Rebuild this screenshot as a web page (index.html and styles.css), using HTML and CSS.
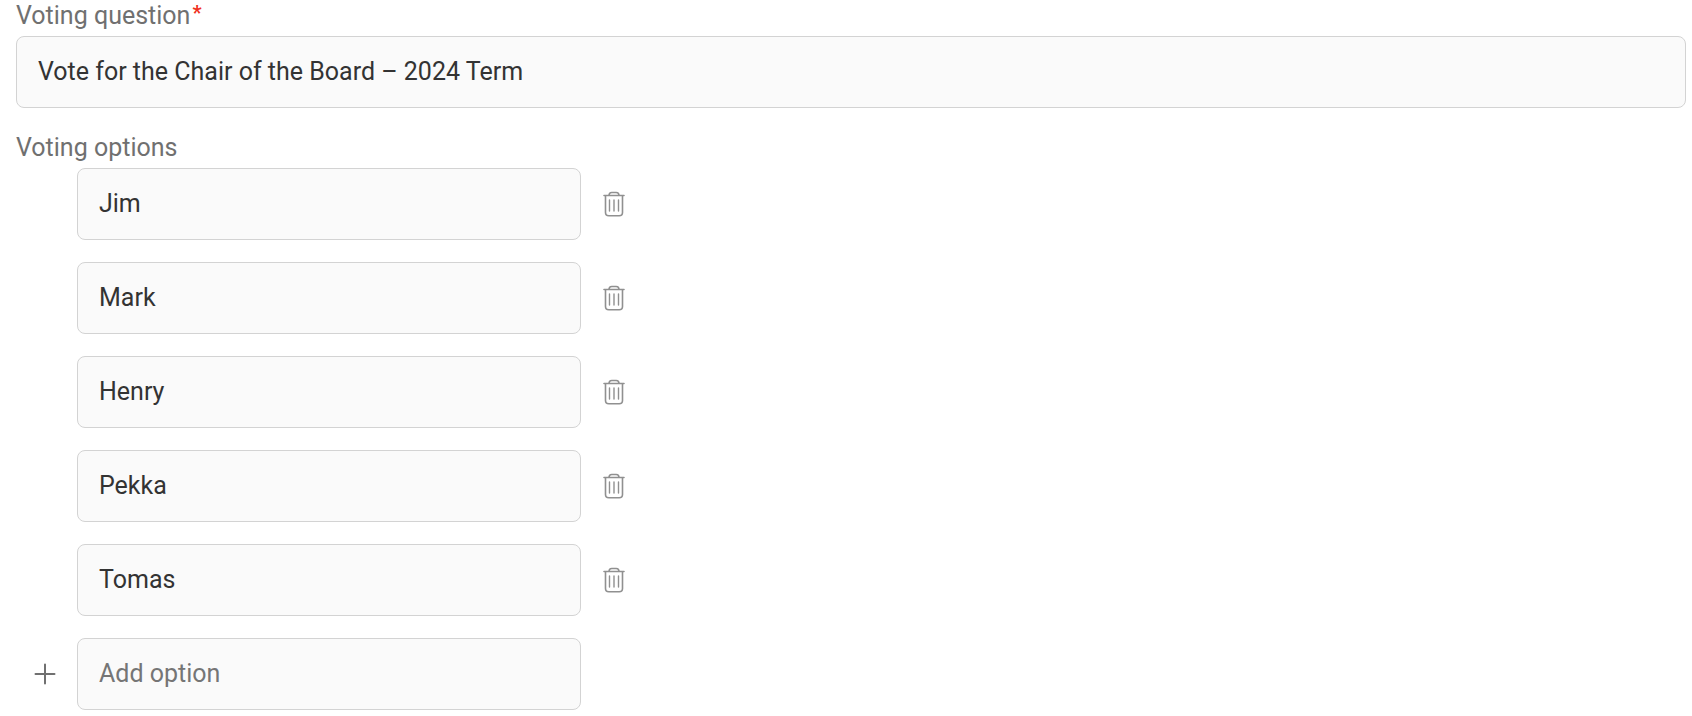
FILE: index.html
```html
<!DOCTYPE html>
<html lang="en">
<head>
  <meta charset="UTF-8">
  <meta name="viewport" content="width=device-width, initial-scale=1.0">
  <title>Voting</title>
  <link rel="stylesheet" href="styles.css">
</head>
<body>
  <svg class="sprite" aria-hidden="true">
    <symbol id="trash" viewBox="0 0 22 26">
      <path d="M1 4.5h20M6 4.5C6 2.3 7 1.5 8.8 1.5h4.4C15 1.5 16 2.3 16 4.5M2.5 4.5v17c0 2.2 1.2 3.3 3.3 3.3h10.4c2.1 0 3.3-1.1 3.3-3.3v-17"/>
      <path class="thin" d="M6.5 9v11M11 9v11M15.5 9v11"/>
    </symbol>
  </svg>

  <form class="voting-form">
    <div class="field">
      <label class="label" for="question">Voting question<span class="required">*</span></label>
      <input class="input" type="text" id="question" value="Vote for the Chair of the Board – 2024 Term" required>
    </div>

    <fieldset class="field">
      <legend class="label">Voting options</legend>
      <div class="options">
        <div class="option">
          <input class="input" type="text" aria-label="Option 1" value="Jim">
          <button class="icon-btn" type="button" aria-label="Delete Jim"><svg class="trash"><use href="#trash"/></svg></button>
        </div>
        <div class="option">
          <input class="input" type="text" aria-label="Option 2" value="Mark">
          <button class="icon-btn" type="button" aria-label="Delete Mark"><svg class="trash"><use href="#trash"/></svg></button>
        </div>
        <div class="option">
          <input class="input" type="text" aria-label="Option 3" value="Henry">
          <button class="icon-btn" type="button" aria-label="Delete Henry"><svg class="trash"><use href="#trash"/></svg></button>
        </div>
        <div class="option">
          <input class="input" type="text" aria-label="Option 4" value="Pekka">
          <button class="icon-btn" type="button" aria-label="Delete Pekka"><svg class="trash"><use href="#trash"/></svg></button>
        </div>
        <div class="option">
          <input class="input" type="text" aria-label="Option 5" value="Tomas">
          <button class="icon-btn" type="button" aria-label="Delete Tomas"><svg class="trash"><use href="#trash"/></svg></button>
        </div>
        <div class="option">
          <button class="icon-btn add-btn" type="button" aria-label="Add option">
            <svg class="plus" viewBox="0 0 22 22"><path d="M11 1.5v19M1.5 11h19"/></svg>
          </button>
          <input class="input" type="text" aria-label="New option" placeholder="Add option">
        </div>
      </div>
    </fieldset>
  </form>
</body>
</html>
```

FILE: styles.css
```css
* {
  box-sizing: border-box;
}
body {
  font-family: Roboto, "Liberation Sans", sans-serif;
  font-size: 25px;
  margin: 0;
  background: #fff;
  color: #333;
}
.sprite {
  display: none;
}
.voting-form {
  padding: 0 6px 0 16px;
}
.field {
  min-width: 0;
  margin: 0 0 24px;
  padding: 0;
  border: 0;
}
.field:last-child {
  margin-bottom: 0;
}
.label {
  display: block;
  padding: 0;
  margin-bottom: 4px;
  line-height: 32px;
  color: #707070;
}
.required {
  margin-left: 2px;
  font-size: 20px;
  line-height: 10px;
  font-weight: bold;
  vertical-align: 4px;
  color: #f03020;
}
.input {
  display: block;
  width: 100%;
  height: 72px;
  padding: 0 21px 2px;
  border: 1px solid #d3d3d3;
  border-radius: 8px;
  background: #fafafa;
  color: #333;
  font: inherit;
}
.input::placeholder {
  color: #757575;
  opacity: 1;
}
.options {
  display: grid;
  gap: 22px;
}
.option {
  display: grid;
  grid-template-columns: 61px minmax(0, 504px) 66px;
  align-items: center;
}
.option .input {
  grid-column: 2;
}
.icon-btn {
  display: flex;
  justify-content: center;
  padding: 0;
  border: 0;
  background: none;
  color: #909090;
  cursor: pointer;
}
.add-btn {
  padding-left: 18px;
  justify-content: flex-start;
  color: #707070;
}
.trash {
  width: 22px;
  height: 26px;
}
.plus {
  width: 22px;
  height: 22px;
}
.trash,
.plus {
  fill: none;
  stroke: currentColor;
  stroke-width: 2;
  stroke-linecap: round;
}
.trash {
  stroke-width: 1.6;
}
.thin {
  stroke-width: 1.4;
}
```
